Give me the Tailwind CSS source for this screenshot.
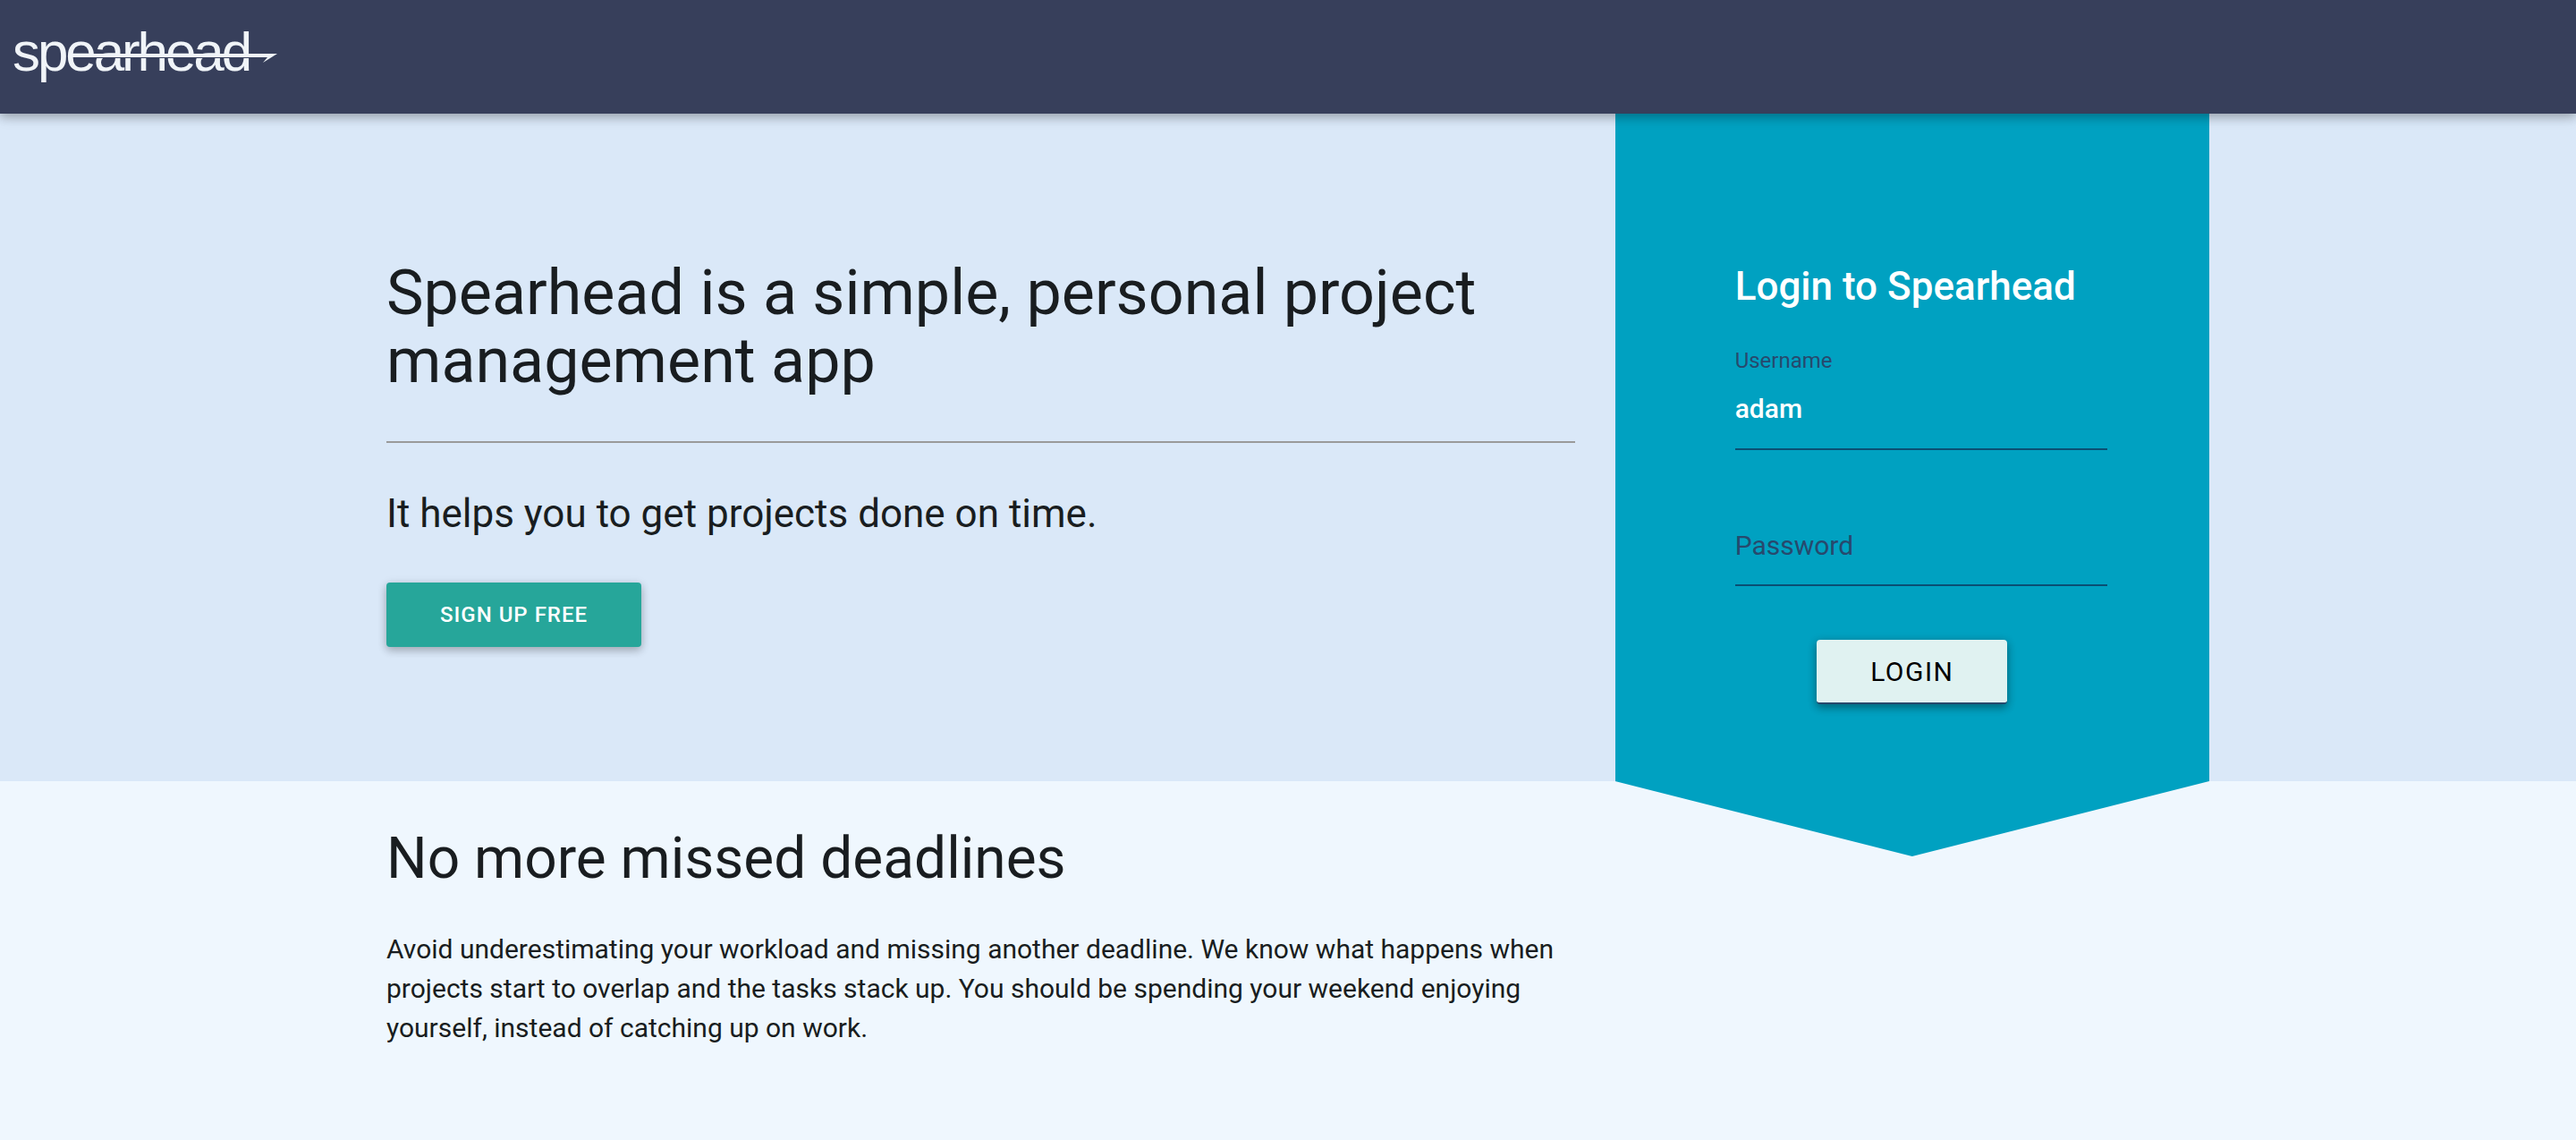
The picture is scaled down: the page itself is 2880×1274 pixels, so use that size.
<!DOCTYPE html>
<html lang="en">
<head>
<meta charset="utf-8">
<meta name="viewport" content="width=device-width, initial-scale=1">
<title>Spearhead</title>
<script src="https://cdn.jsdelivr.net/npm/@tailwindcss/browser@4"></script>
</head>
<body class="min-h-screen bg-[#eff7fe] font-['Roboto',sans-serif] text-[#191d20]">

<header class="relative z-10 h-[127px] bg-[#373f5b] shadow-[0_4px_10px_0_rgba(0,0,0,0.2),0_2px_16px_0_rgba(0,0,0,0.16)]">
  <a href="#" aria-label="Spearhead home" class="inline-block">
    <svg class="block h-[127px] w-80 fill-[#f0f4f8]" viewBox="0 0 320 127">
      <text x="14" y="79" class="font-['Liberation_Sans',sans-serif] text-[62px] tracking-tighter">spearhead</text>
      <path class="fill-[#373f5b]" d="M88 64H283V65H88Z"/>
      <path d="M80 60H310L294 70L299 64H80Z"/>
    </svg>
  </a>
</header>

<main>
  <section class="bg-[#dae8f8] px-[15%]">
    <div class="-mr-[22px] grid grid-cols-[2fr_1fr] gap-[45px]">
      <div class="pt-[162px]">
        <h1 class="text-[70px] leading-[76px]">Spearhead is a simple, personal project management app</h1>
        <hr class="mt-[52px] mb-[55px] border-t-2 border-[#9a9a9a]">
        <p class="text-[44px] leading-[48px]">It helps you to get projects done on time.</p>
        <button type="button" class="mt-[53px] h-[72px] rounded-[4px] bg-[#26a69a] px-[60px] text-[24px] font-medium tracking-[1px] text-white shadow-[0_4px_10px_0_rgba(0,0,0,0.2),0_2px_12px_0_rgba(0,0,0,0.12)]">SIGN UP FREE</button>
      </div>

      <div class="relative bg-[#00a1c1] pt-[169px] pb-[86px]">
        <form class="flex flex-col">
          <div class="flex flex-col pr-[114px] pl-[134px]">
            <h2 class="text-[44px] leading-[48px] font-medium text-white">Login to Spearhead</h2>
            <label for="username" class="mt-[45px] h-[22px] text-[24px] leading-[28px] text-[#27496d]">Username</label>
            <input id="username" type="text" value="adam" class="h-[92px] w-full border-b-2 border-[#0a4f73] bg-transparent text-[30px] font-medium text-white outline-none">
            <div class="mt-[60px] grid items-center">
              <label for="password" class="col-start-1 row-start-1 text-[30px] text-[#27496d]">Password</label>
              <input id="password" type="password" class="col-start-1 row-start-1 h-[92px] w-full border-b-2 border-[#0a4f73] bg-transparent text-[30px] font-medium text-white outline-none">
            </div>
          </div>
          <button type="submit" class="mt-[60px] h-[72px] self-center rounded-[4px] border-b-2 border-[#27496d] bg-[#e0f2f1] px-[60px] text-[30px] tracking-wider text-black shadow-[0_4px_10px_0_rgba(0,0,0,0.28),0_2px_12px_0_rgba(0,0,0,0.16)]">LOGIN</button>
        </form>
        <div class="absolute inset-x-0 top-full h-[84px] bg-[#00a1c1] [clip-path:polygon(0_0,100%_0,50%_100%)]"></div>
      </div>
    </div>
  </section>

  <section class="px-[15%] pt-[52px]">
    <div class="-mr-[22px] grid grid-cols-[2fr_1fr] gap-[45px]">
      <div>
        <h2 class="text-[64px] leading-[70px]">No more missed deadlines</h2>
        <p class="mt-[44px] text-[30px] leading-[44px]">Avoid underestimating your workload and missing another deadline. We know what happens when projects start to overlap and the tasks stack up. You should be spending your weekend enjoying yourself, instead of catching up on work.</p>
      </div>
    </div>
  </section>
</main>
</body>
</html>
